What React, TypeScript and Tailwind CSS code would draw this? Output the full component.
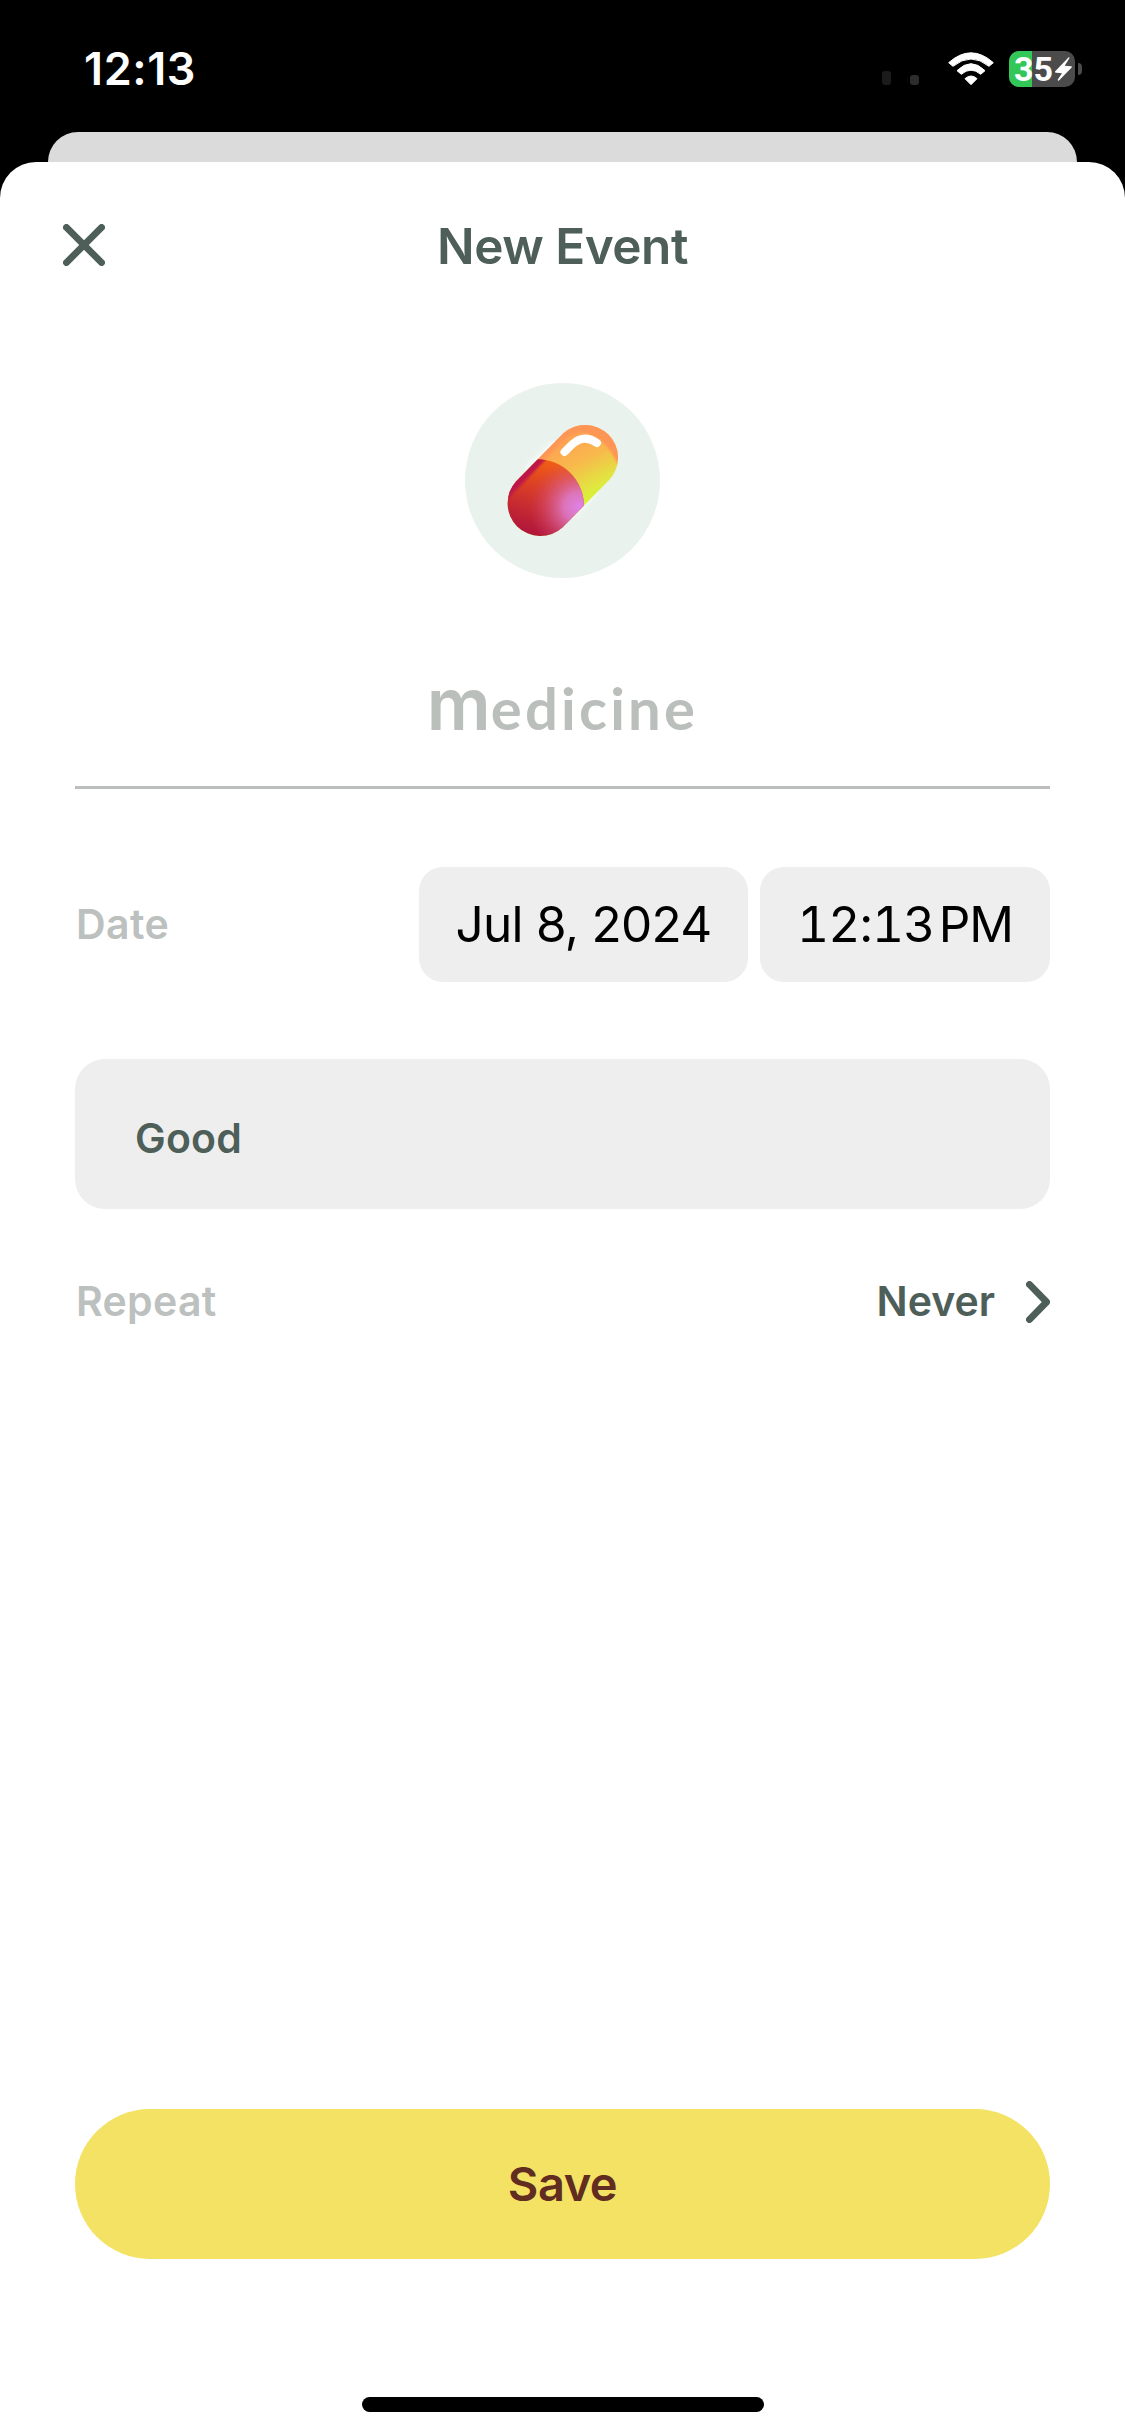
import { FC, ReactNode } from 'react'

const WifiIcon: FC = () => (
	<svg className="w-[46px] h-[34px]" viewBox="264 65 138 102" fill="white" stroke="white" strokeWidth="3" strokeLinejoin="round">
		<path d="M266 97 Q333 38 400 97 L387 108 Q333 64 279 108 Z" />
		<path d="M291 121 Q333 79 375 121 L362 132 Q333 107 304 132 Z" />
		<path d="M315 145 Q333 129 351 145 L333 163 Z" />
	</svg>
)

const Battery: FC = () => (
	<div className="flex items-center">
		<div className="relative w-[66px] h-9 rounded-[10px] bg-[#4b4b4b]">
			<div className="w-[23px] h-full rounded-l-[10px] bg-[#33c758]" />
			<span className="absolute left-[5px] top-0 font-[Roboto,sans-serif] text-[34px] leading-9 font-bold">35</span>
			<svg className="absolute left-[46px] top-[6px] w-[17px] h-6" viewBox="584 82 51 71" fill="white">
				<path d="M625 82 L584 125 Q583 129 587 129 L605 130 L592 150 Q593 154 596 152 L634 113 Q636 109 632 109 L613 108 L628 84 Z" />
			</svg>
		</div>
		<div className="ml-[3px] w-1 h-3 rounded-r-full bg-[#4b4b4b]" />
	</div>
)

const PillIcon: FC = () => (
	<svg className="w-[195px] h-[195px]" viewBox="0 0 195 195">
		<defs>
			<linearGradient id="top" x1="90" y1="55" x2="124" y2="120" gradientUnits="userSpaceOnUse">
				<stop offset="0" stopColor="#ff9d55" />
				<stop offset="0.45" stopColor="#f8b94c" />
				<stop offset="0.85" stopColor="#dfe93f" />
				<stop offset="1" stopColor="#d5f52b" />
			</linearGradient>
			<linearGradient id="bottom" x1="84" y1="80" x2="62" y2="150" gradientUnits="userSpaceOnUse">
				<stop offset="0" stopColor="#f05c16" />
				<stop offset="0.4" stopColor="#d83c28" />
				<stop offset="1" stopColor="#b0153c" />
			</linearGradient>
			<radialGradient id="pink" cx="114" cy="124" r="50" gradientUnits="userSpaceOnUse">
				<stop offset="0" stopColor="#df82e6" />
				<stop offset="0.3" stopColor="#dc7ac8" stopOpacity="0.9" />
				<stop offset="1" stopColor="#d0406c" stopOpacity="0" />
			</radialGradient>
			<filter id="glow" x="-30%" y="-30%" width="160%" height="160%">
				<feGaussianBlur stdDeviation="3" />
			</filter>
			<filter id="soft">
				<feGaussianBlur stdDeviation="0.8" />
			</filter>
			<clipPath id="capsule">
				<path d="M51.2 98.2 L98.2 50.6 A32.7 32.7 0 0 1 144.4 96.8 L97.4 144.4 A32.7 32.7 0 0 1 51.2 98.2 Z" />
			</clipPath>
			<clipPath id="lower">
				<path d="M30 76.3 L72.3 76.3 A46.7 46.7 0 0 1 119 123 L119 170 L30 170 Z" />
			</clipPath>
		</defs>
		<circle cx="97.5" cy="97.5" r="97.5" fill="#eaf2ee" />
		<path d="M74 121 L120 73" stroke="white" strokeWidth="66" strokeLinecap="round" filter="url(#glow)" />
		<g clipPath="url(#capsule)">
			<rect x="30" y="30" width="135" height="135" fill="url(#top)" />
			{/* darker rim on the far side of the cap */}
			<path d="M60 85 L98 46 Q130 28 160 65 L160 90 L152 80 Q143 60 128 52 Q112 45 100 56 L74 82 Z" fill="#fd9654" filter="url(#soft)" />
			<g clipPath="url(#lower)">
				<rect x="30" y="70" width="100" height="100" fill="url(#bottom)" />
				<rect x="30" y="70" width="100" height="100" fill="url(#pink)" />
				<path d="M35 115 L70 74 L83 74 L58 100 Q48 109 40 119 Z" fill="#bd1748" filter="url(#soft)" />
			</g>
		</g>
		<path d="M99.5 69 L107 61.5 Q119 50.5 132 60" fill="none" stroke="white" strokeWidth="8" strokeLinecap="round" strokeLinejoin="round" />
	</svg>
)

const StatusBar: FC = () => (
	<div className="h-[132px] flex justify-between pl-[84px] pr-[43px] text-white">
		<span className="mt-[42px] text-[45px] leading-[54px] font-semibold tracking-[0.6px]">12:13</span>
		<div className="mt-[51px] h-9 flex items-center">
			<div className="flex items-end h-[14px] gap-[19px] mt-[18px] mr-[29px]">
				<div className="w-[9px] h-[14px] rounded-[3px] bg-[#1b1b1b]" />
				<div className="w-[9px] h-[10px] rounded-[3px] bg-[#2d2d2d]" />
			</div>
			<WifiIcon />
			<div className="ml-[15px]">
				<Battery />
			</div>
		</div>
	</div>
)

const DateChip: FC<{ className: string; children: ReactNode }> = ({ className, children }) => (
	<button className={`h-[115px] rounded-3xl bg-[#eeeeee] text-[49.5px] text-black whitespace-nowrap ${className}`}>{children}</button>
)

const App: FC = () => {

	return (
		<div className="w-[1125px] h-[2436px] flex flex-col bg-black overflow-hidden font-[Inter,'Liberation_Sans',sans-serif]">
			<StatusBar />
			<div className="mx-[48px] h-[30px] shrink-0 rounded-t-[30px] bg-[#dbdbdb]" />
			<div className="flex-1 flex flex-col rounded-t-[36px] bg-white px-[75px] text-[#4e5e58]">
				<div className="-mx-[75px] px-[63px] h-[168px] grid grid-cols-3 items-center">
					<svg className="-mt-[2px] w-[42px] h-[42px]" viewBox="0 0 42 42" fill="none" stroke="currentColor" strokeWidth="6.8" strokeLinecap="round">
						<path d="M3.4 3.4 L38.6 38.6 M38.6 3.4 L3.4 38.6" />
					</svg>
					<h1 className="mt-[1px] text-center text-[49.5px] font-semibold tracking-[-0.5px] whitespace-nowrap">New Event</h1>
				</div>

				<div className="mt-[53px] flex justify-center">
					<PillIcon />
				</div>

				<div className="mt-[80px] h-[131px] flex justify-center items-baseline border-b-3 border-[#bbbebc] pt-[11px] text-[#babfbc] font-[Lato,sans-serif] font-bold leading-[70px]">
					<span className="font-[Inter,sans-serif] text-[71px] font-semibold">m</span>
					<span className="text-[58px] tracking-[3.2px]">edicine</span>
				</div>

				<div className="mt-[78px] flex items-center">
					<span className="flex-1 pl-[1px] text-[41px] font-semibold tracking-[0.4px] text-[#bcc0be]">Date</span>
					<DateChip className="w-[329px] tracking-[-0.7px]">Jul 8, 2024</DateChip>
					<DateChip className="ml-3 w-[290px]"><span className="tabular-nums tracking-[-0.8px]">12:13</span><span className="ml-1 tracking-[-1px]">PM</span></DateChip>
				</div>

				<div className="mt-[77px] h-[150px] flex items-center rounded-[30px] bg-[#eeeeee] px-[60px]">
					<span className="mt-[10px] text-[41px] font-semibold tracking-[0.2px]">Good</span>
				</div>

				<div className="mt-[66px] h-[54px] flex items-center text-[41px] font-semibold">
					<span className="flex-1 pl-[1px] tracking-[0.3px] text-[#bcc0be]">Repeat</span>
					<span>Never</span>
					<svg className="ml-[31px] w-6 h-[42px]" viewBox="0 0 24 42" fill="none" stroke="currentColor" strokeWidth="6.8" strokeLinecap="round" strokeLinejoin="round">
						<path d="M3.4 3.4 L20.6 21 L3.4 38.6" />
					</svg>
				</div>

				<button className="mt-auto h-[150px] shrink-0 rounded-full bg-[#f4e264] text-[47px] font-semibold tracking-[-0.5px] text-[#612d20]">Save</button>
				<div className="mt-[138px] mb-6 mx-auto w-[402px] h-[15px] shrink-0 rounded-full bg-black" />
			</div>
		</div>
	)
}

export default App
